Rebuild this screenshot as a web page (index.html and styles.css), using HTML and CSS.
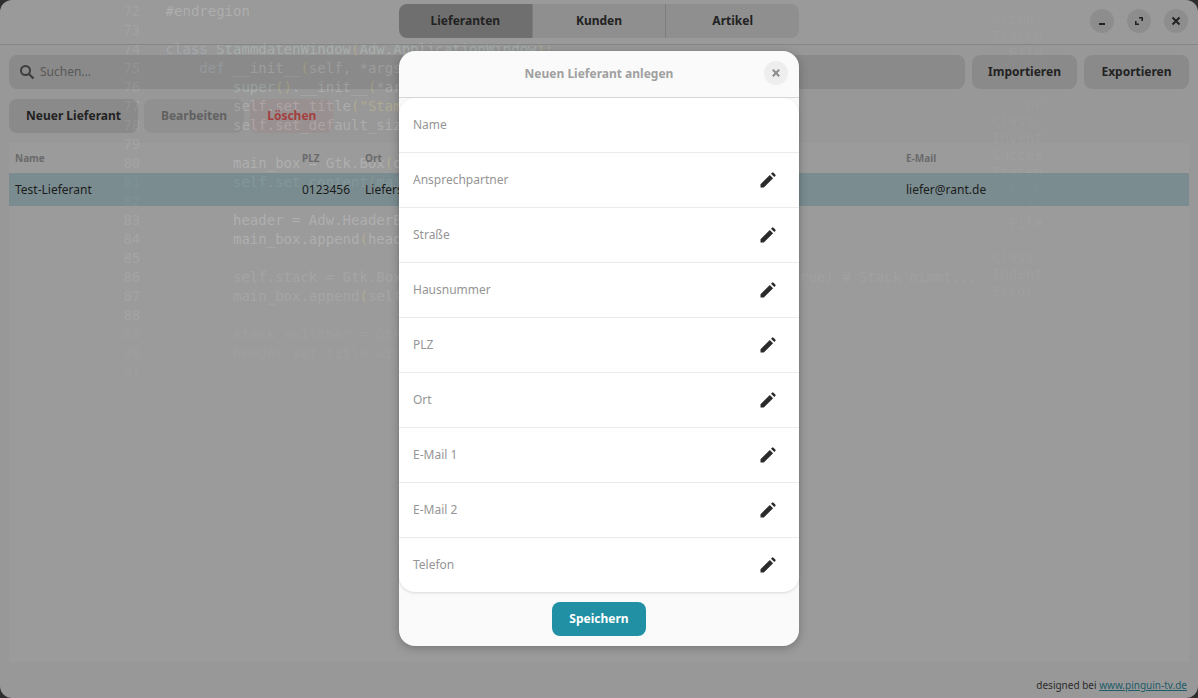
FILE: index.html
```html
<!DOCTYPE html>
<html lang="de">
<head>
  <meta charset="UTF-8" />
  <title>Stammdaten</title>
  <link rel="stylesheet" href="styles.css">
</head>
<body>
  <div class="window">
    <pre class="code"><span class="num"> 72</span>   <span class="w">#endregion</span>
<span class="num"> 73</span>
<span class="num"> 74</span>   <span class="b">class</span> <span class="g">StammdatenWindow</span><span class="y">(</span><span class="g">Adw.ApplicationWindow</span><span class="y">):</span>
<span class="num"> 75</span>       <span class="b">def</span> <span class="w">__init__</span><span class="y">(</span><span class="w">self, *args</span>
<span class="num"> 76</span>           <span class="g">super</span><span class="y">()</span><span class="w">.__init__</span><span class="y">(</span><span class="w">*ar</span>
<span class="num"> 77</span>           <span class="w">self.set_title</span><span class="y">("Stam</span>
<span class="num"> 78</span>           <span class="w">self.set_default_siz</span>
<span class="num"> 79</span>
<span class="num"> 80</span>           <span class="w">main_box = Gtk.Box</span><span class="y">(</span><span class="w">o</span>
<span class="num"> 81</span>           <span class="g">self.set_content</span><span class="y">(</span><span class="g">mai</span>
<span class="num"> 82</span>
<span class="num"> 83</span>           <span class="w">header = Adw.HeaderB</span>
<span class="num"> 84</span>           <span class="w">main_box.append</span><span class="y">(</span><span class="w">head</span>
<span class="num"> 85</span>
<span class="num"> 86</span>           <span class="f">self.stack = Gtk.Box</span>
<span class="num"> 87</span>           <span class="f">main_box.append</span><span class="y">(</span><span class="f">self</span>
<span class="num"> 88</span>
<span class="ff"> 89</span>           <span class="ff">stack_switcher = Gtk</span>
<span class="ff"> 90</span>           <span class="ff">header.set_title_wid</span>
<span class="ff"> 91</span></pre>
    <pre class="code-rest">rue) # Stack nimmt...</pre>
    <pre class="terminal">arimn
Traceb
  File


    pr
class
Invent
Succes
Traceb
  File
    fr
  File

class
Indent
Error
</pre>

    <header class="titlebar">
      <div class="switcher">
        <button class="tab active">Lieferanten</button>
        <button class="tab">Kunden</button>
        <button class="tab">Artikel</button>
      </div>
      <div class="controls">
        <span class="ctl"><svg width="16" height="16" viewBox="0 0 16 16"><rect x="5" y="10" width="6" height="2" fill="#222"/></svg></span>
        <span class="ctl"><svg width="16" height="16" viewBox="0 0 16 16"><path d="M8 4h4v4h-1.600V5.600H8zM4 8h1.600v2.400H8V12H4z" fill="#222"/></svg></span>
        <span class="ctl"><svg width="16" height="16" viewBox="0 0 16 16"><path d="M4.500 4.500l7 7M11.500 4.500l-7 7" stroke="#222" stroke-width="2"/></svg></span>
      </div>
    </header>

    <div class="toolbar">
      <div class="search">
        <svg width="16" height="16" viewBox="0 0 16 16"><circle cx="6.500" cy="6.500" r="4.500" fill="none" stroke="#3d3d3d" stroke-width="2"/><path d="M10 10l4.500 4.500" stroke="#3d3d3d" stroke-width="2.200"/></svg>
        <span>Suchen...</span>
      </div>
      <button class="btn wide">Importieren</button>
      <button class="btn wide">Exportieren</button>
    </div>

    <div class="actions">
      <button class="btn">Neuer Lieferant</button>
      <button class="btn disabled">Bearbeiten</button>
      <button class="btn danger">Löschen</button>
    </div>

    <div class="table">
      <div class="row head">
        <span class="c-name">Name</span>
        <span class="c-plz">PLZ</span>
        <span class="c-ort">Ort</span>
        <span class="c-mail">E-Mail</span>
      </div>
      <div class="row selected">
        <span class="c-name">Test-Lieferant</span>
        <span class="c-plz">0123456</span>
        <span class="c-ort">Lieferstadt</span>
        <span class="c-mail">liefer@rant.de</span>
      </div>
    </div>

    <footer class="credit">designed bei <a href="#">www.pinguin-tv.de</a></footer>

    <div class="modal">
      <div class="modal-head">
        <span class="modal-title">Neuen Lieferant anlegen</span>
        <span class="modal-close"><svg width="16" height="16" viewBox="0 0 16 16"><path d="M4.800 4.800l6.400 6.400M11.200 4.800l-6.400 6.400" stroke="#8c8c8c" stroke-width="2"/></svg></span>
      </div>
      <div class="form">
        <div class="field"><span>Name</span></div>
        <div class="field"><span>Ansprechpartner</span><svg class="pen" viewBox="0 0 16 16"><path d="M0.500 15.500v-3.300L9.800 2.900l3.300 3.300-9.300 9.300zM11 1.700l1-1a1.100 1.100 0 0 1 1.500 0l1.800 1.800a1.100 1.100 0 0 1 0 1.500l-1 1z"/></svg></div>
        <div class="field"><span>Straße</span><svg class="pen" viewBox="0 0 16 16"><path d="M0.500 15.500v-3.300L9.800 2.900l3.300 3.300-9.300 9.300zM11 1.700l1-1a1.100 1.100 0 0 1 1.500 0l1.800 1.800a1.100 1.100 0 0 1 0 1.500l-1 1z"/></svg></div>
        <div class="field"><span>Hausnummer</span><svg class="pen" viewBox="0 0 16 16"><path d="M0.500 15.500v-3.300L9.800 2.900l3.300 3.300-9.300 9.300zM11 1.700l1-1a1.100 1.100 0 0 1 1.500 0l1.800 1.800a1.100 1.100 0 0 1 0 1.500l-1 1z"/></svg></div>
        <div class="field"><span>PLZ</span><svg class="pen" viewBox="0 0 16 16"><path d="M0.500 15.500v-3.300L9.800 2.900l3.300 3.300-9.300 9.300zM11 1.700l1-1a1.100 1.100 0 0 1 1.500 0l1.800 1.800a1.100 1.100 0 0 1 0 1.500l-1 1z"/></svg></div>
        <div class="field"><span>Ort</span><svg class="pen" viewBox="0 0 16 16"><path d="M0.500 15.500v-3.300L9.800 2.900l3.300 3.300-9.300 9.300zM11 1.700l1-1a1.100 1.100 0 0 1 1.500 0l1.800 1.800a1.100 1.100 0 0 1 0 1.500l-1 1z"/></svg></div>
        <div class="field"><span>E-Mail 1</span><svg class="pen" viewBox="0 0 16 16"><path d="M0.500 15.500v-3.300L9.800 2.900l3.300 3.300-9.300 9.300zM11 1.700l1-1a1.100 1.100 0 0 1 1.500 0l1.800 1.800a1.100 1.100 0 0 1 0 1.500l-1 1z"/></svg></div>
        <div class="field"><span>E-Mail 2</span><svg class="pen" viewBox="0 0 16 16"><path d="M0.500 15.500v-3.300L9.800 2.900l3.300 3.300-9.300 9.300zM11 1.700l1-1a1.100 1.100 0 0 1 1.500 0l1.800 1.800a1.100 1.100 0 0 1 0 1.500l-1 1z"/></svg></div>
        <div class="field"><span>Telefon</span><svg class="pen" viewBox="0 0 16 16"><path d="M0.500 15.500v-3.300L9.800 2.900l3.300 3.300-9.300 9.300zM11 1.700l1-1a1.100 1.100 0 0 1 1.500 0l1.800 1.800a1.100 1.100 0 0 1 0 1.500l-1 1z"/></svg></div>
      </div>
      <div class="modal-foot">
        <button class="save">Speichern</button>
      </div>
    </div>
  </div>
</body>
</html>
```

FILE: styles.css
```css
html, body {
  margin: 0;
  padding: 0;
  height: 100%;
  background-color: #2e2e2e;
  overflow: hidden;
}

body, button {
  font-family: "Noto Sans", sans-serif;
  font-size: 12px;
}

button {
  border: none;
  margin: 0;
  padding: 0 0 2px;
}

.window {
  position: relative;
  height: 698px;
  background-color: #989898;
  border-radius: 12px;
  overflow: hidden;
  color: #1f1f1f;
}

.titlebar, .toolbar, .actions, .table {
  position: relative;
  z-index: 1;
}

.titlebar {
  display: flex;
  justify-content: center;
  align-items: flex-start;
  height: 40px;
  padding-top: 4px;
  background-color: rgba(255,255,255,0.02);
  border-bottom: 1px solid #868686;
}

.switcher {
  display: flex;
  width: 400px;
  height: 34px;
  border-radius: 8px;
  overflow: hidden;
  background-color: rgba(0,0,0,0.07);
}

.tab {
  flex: 1;
  background: transparent;
  color: #222;
  font-weight: 700;
  border-left: 1px solid rgba(0,0,0,0.12);
}

.tab:first-child {
  border-left: none;
}

.tab.active {
  background-color: rgba(0,0,0,0.22);
}

.controls {
  position: absolute;
  top: 9px;
  right: 10px;
  display: flex;
  gap: 13px;
}

.ctl {
  display: flex;
  align-items: center;
  justify-content: center;
  width: 24px;
  height: 24px;
  border-radius: 50%;
  background-color: rgba(0,0,0,0.08);
}

.toolbar {
  display: flex;
  gap: 7px;
  padding: 10px 9px 0;
}

.search {
  flex: 1;
  display: flex;
  align-items: center;
  gap: 5px;
  height: 34px;
  padding: 0 0 2px 10px;
  box-sizing: border-box;
  border-radius: 8px;
  background-color: rgba(0,0,0,0.09);
  color: #585858;
}

.search svg {
  margin-top: 2px;
}

.btn {
  height: 34px;
  padding: 0 17px 2px;
  border-radius: 8px;
  background-color: rgba(0,0,0,0.09);
  color: #222;
  font-weight: 700;
}

.btn.wide {
  width: 105px;
  padding: 0 0 2px;
}

.actions {
  display: flex;
  gap: 6px;
  padding: 10px 9px 0;
}

.btn.disabled {
  background-color: rgba(0,0,0,0.05);
  color: #616161;
}

.btn.danger {
  background-color: rgba(170,60,60,0.08);
  color: #a44040;
}

.table {
  margin: 10px 9px 0;
  height: 519px;
  background-color: rgba(255,255,255,0.03);
}

.row {
  display: flex;
  align-items: center;
}

.row.head {
  height: 30px;
  color: #6a6a6a;
  font-size: 10px;
  font-weight: 700;
}

.row.selected {
  height: 33px;
  background-color: rgba(89,125,133,0.5);
  color: #1c1c1c;
}

.c-name {
  width: 287px;
  padding-left: 6px;
}

.c-plz {
  width: 63px;
}

.c-ort {
  width: 541px;
}

.credit {
  position: absolute;
  z-index: 1;
  right: 11px;
  bottom: 6px;
  font-size: 10px;
  color: #2b2b2b;
}

.credit a {
  color: #1d5c68;
}

/* editor and terminal shining through the translucent window */
.code, .code-rest, .terminal {
  position: absolute;
  margin: 0;
  font-family: "DejaVu Sans Mono", monospace;
  font-size: 14px;
  line-height: 19px;
}

.code {
  top: 2px;
  left: 115px;
  color: #a8a8a8;
}

.code .num { color: #a2a2a2; }
.code .w { color: #adadad; }
.code .b { color: #a3a8ad; }
.code .g { color: #a7afad; }
.code .y { color: #aeaa91; }
.code .f { color: #a3a3a3; }
.code .ff { color: #9c9c9c; }

.code-rest {
  top: 268px;
  left: 800px;
  color: #9e9e9e;
}

.terminal {
  top: 11px;
  left: 992px;
  line-height: 17px;
  color: #9c9c9c;
}

.modal {
  position: absolute;
  z-index: 2;
  top: 51px;
  left: 399px;
  width: 400px;
  height: 595px;
  display: flex;
  flex-direction: column;
  background-color: #fafafa;
  border-radius: 16px;
  box-shadow: 0 2px 10px rgba(0,0,0,0.25);
}

.modal-head {
  position: relative;
  display: flex;
  align-items: center;
  justify-content: center;
  height: 46px;
  border-bottom: 1px solid #d6d6d6;
}

.modal-title {
  margin-bottom: 2px;
  color: #a0a0a0;
  font-weight: 700;
}

.modal-close {
  position: absolute;
  top: 10px;
  right: 11px;
  display: flex;
  align-items: center;
  justify-content: center;
  width: 24px;
  height: 24px;
  border-radius: 50%;
  background-color: #eeeeee;
}

.form {
  background-color: #fff;
  border-radius: 16px;
  box-shadow: 0 1px 3px rgba(0,0,0,0.14);
}

.field {
  display: flex;
  align-items: center;
  justify-content: space-between;
  height: 54px;
  padding: 0 23px 0 14px;
  border-bottom: 1px solid #ebebeb;
  color: #959595;
}

.field span {
  margin-bottom: 2px;
}

.field:last-child {
  border-bottom: none;
}

.pen {
  width: 16px;
  height: 16px;
  fill: #2b2b2b;
}

.modal-foot {
  display: flex;
  justify-content: center;
  padding-top: 10px;
}

.save {
  width: 94px;
  height: 34px;
  border-radius: 8px;
  background-color: #2190a4;
  color: #fff;
  font-weight: 700;
}
```
